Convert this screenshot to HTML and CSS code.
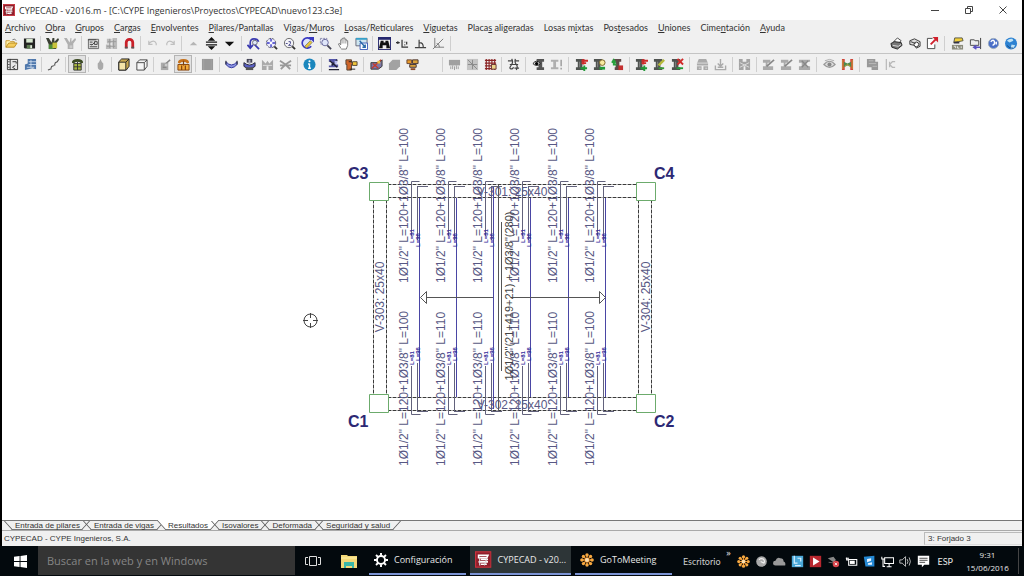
FILE: index.html
```html
<!DOCTYPE html>
<html lang="es">
<head>
<meta charset="utf-8">
<title>CYPECAD - v2016.m</title>
<link rel="stylesheet" href="styles.css">
</head>
<body>
<svg class="sprite" aria-hidden="true">
  <symbol id="logo" viewBox="0 0 14 14"><rect x=".5" y=".5" width="13" height="13" fill="#8e1f2b" stroke="#c8323c"/><path d="M3 3.500h8l-1 2h-7zM5 7h6M3 9h8M5 11h5" fill="none" stroke="#fff" stroke-width="1.300"/><path d="M4 5v7M10 6l-2 6" stroke="#ddd" fill="none"/></symbol>
  <symbol id="open" viewBox="0 0 14 14"><path d="M1 11V4h4l1 1h4v2" fill="#fff3b0" stroke="#c8962a"/><path d="M1 11l3-4.500h9L10 11z" fill="#f5cc5a" stroke="#b98a22"/><path d="M8 3q3-2 4 1" stroke="#777" fill="none"/></symbol>
  <symbol id="save" viewBox="0 0 14 14"><path d="M1 1.500h12v11H2l-1-1z" fill="#222"/><path d="M3.500 2h7v4h-7z" fill="#d8e8d0"/><path d="M4 8.500h6v4H4z" fill="#5c7a50"/><path d="M8 9h1.500v3H8z" fill="#fff"/></symbol>
  <symbol id="tools" viewBox="0 0 14 14"><path d="M0 1h3l3 5 1-5h2v4l4-4 1 2-3 4v6H3V8z" fill="#3a3f34"/><path d="M3 8h5v5H3z" fill="#4f8c38"/><path d="M7 6h5v6H7z" fill="#c8c23c"/></symbol>
  <symbol id="tools-off" viewBox="0 0 14 14"><path d="M0 1h3l3 5 1-5h1v4l4-4 1 2-3 4v6H4V8z" fill="#b0b0b0"/><path d="M6 9h3v3H6z" fill="#ccc"/></symbol>
  <symbol id="layers" viewBox="0 0 14 14"><path d="M1.500 2.500h11v10h-11z" fill="#ddd" stroke="#666"/><path d="M1 3h9M3 5.500h3M3 8h3M3 10.500h8M8 5h3v3H8zM5 9l4-4" stroke="#444" fill="none"/></symbol>
  <symbol id="layers-off" viewBox="0 0 14 14"><path d="M2 2h5v5H2zM8 1h5v12H8zM1 8h6v5H1z" fill="#bbb"/><path d="M2 10h9M3 5h9M9 3v9M5 2v10" stroke="#999"/></symbol>
  <symbol id="magnet" viewBox="0 0 14 14"><path d="M3.500 12V6a3.500 3.500 0 0 1 7 0v6" fill="none" stroke="#c91f28" stroke-width="3"/><path d="M2 10.500h3v2H2zM9 10.500h3v2H9z" fill="#555"/></symbol>
  <symbol id="undo" viewBox="0 0 14 14"><path d="M3 4v4h4M3 7q6-5 8 0v2" fill="none" stroke="#c0c0c0" stroke-width="1.300"/></symbol>
  <symbol id="redo" viewBox="0 0 14 14"><path d="M11 4v4H7M11 7q-6-5-8 0v2" fill="none" stroke="#c0c0c0" stroke-width="1.300"/></symbol>
  <symbol id="up-off" viewBox="0 0 14 14"><path d="M3 9l4-4 4 4z" fill="#b5b5b5"/></symbol>
  <symbol id="updown" viewBox="0 0 14 14"><path d="M7 0l4 4H3zM7 14l4-4H3z" fill="#111"/><path d="M1 5.500h12M1 8.500h12" stroke="#111" stroke-width="1.300"/></symbol>
  <symbol id="down" viewBox="0 0 14 14"><path d="M2 5h10l-5 5z" fill="#111"/></symbol>
  <symbol id="zoomprev" viewBox="0 0 14 14"><path d="M3.500 12V6q0-4 4-4t5 3M8 8l5 5M.500 8.500l3 3.500 3-3.500" fill="none" stroke="#3a3ab0" stroke-width="1.800"/><circle cx="8.500" cy="6" r="2.500" fill="#dfe8f8" stroke="#667"/></symbol>
  <symbol id="zoomall" viewBox="0 0 14 14"><circle cx="6.500" cy="6.500" r="5" fill="#eef" stroke="#556" stroke-dasharray="3 1"/><path d="M10 10l3 3" stroke="#333" stroke-width="2"/><path d="M6.500 2v9M2 6.500h9" stroke="#3a3ac8" stroke-width="1.500"/><circle cx="6.500" cy="6.500" r="1.600" fill="#fff"/></symbol>
  <symbol id="zoom2" viewBox="0 0 14 14"><circle cx="6.500" cy="6.500" r="5" fill="#f4f4f8" stroke="#666"/><path d="M10 10l3 3" stroke="#333" stroke-width="2"/><path d="M3 7h2M6 5h2v2L6 9h3" fill="none" stroke="#448"/></symbol>
  <symbol id="redraw" viewBox="0 0 14 14"><path d="M11 3a5.500 5.500 0 1 0 0 7" fill="#dde4fa" stroke="#3a3ac0" stroke-width="1.800"/><path d="M8 0h6v6z" fill="#3a3ac0"/><path d="M4 10l6-6 2 2-6 6z" fill="#e8c73a" stroke="#665" stroke-width=".700"/></symbol>
  <symbol id="zoomwin" viewBox="0 0 14 14"><path d="M1.500 1.500h7v6h-7z" fill="#e5e8f8" stroke="#88a" stroke-dasharray="2 1"/><circle cx="6.500" cy="6" r="3.500" fill="#dfe6fa" stroke="#669"/><path d="M9 9l4 4" stroke="#445" stroke-width="2"/></symbol>
  <symbol id="hand" viewBox="0 0 14 14"><path d="M4 12L1.500 7.500 3 7l1 1.500V3h1.500v-1.500H7V1h1.500v1.500H10V4h1.500v5L10 13H5z" fill="#fff" stroke="#777"/><path d="M5.500 3v4M7.500 2v5M9.500 3v4" stroke="#999"/></symbol>
  <symbol id="winview" viewBox="0 0 14 14"><path d="M1 1.500h12v8H1z" fill="#cfe6f0" stroke="#667"/><path d="M1 1h12v2H1z" fill="#37a0c8"/><path d="M5.500 6.500h8v7h-8z" fill="#fff" stroke="#3a5ab8"/><path d="M5 4l6 7M11 8v3H8" stroke="#2a6aa8" fill="none" stroke-width="1.500"/></symbol>
  <symbol id="binoc" viewBox="0 0 14 14"><path d="M0 0h14v14H0z" fill="#26286e"/><path d="M1 3h12v10H1z" fill="#eee"/><path d="M3 4h3v2h2V4h3l2 8H9V9H5v3H1z" fill="#111"/></symbol>
  <symbol id="snap1" viewBox="0 0 14 14"><path d="M0 6h4M2 4.500v3M6.500 3v8H13M9 8.500h1M11.500 5v3M9.500 5v1" fill="none" stroke="#333" stroke-width="1.300"/></symbol>
  <symbol id="perp" viewBox="0 0 14 14"><path d="M1 11.500h12M5.500 3v8M6 6q4 0 4 5" fill="none" stroke="#444" stroke-width="1.300"/></symbol>
  <symbol id="angle" viewBox="0 0 14 14"><path d="M3 1v10h10M1 13L12 2M5 7q3 0 3 4" fill="none" stroke="#777"/></symbol>
  <symbol id="printer" viewBox="0 0 14 14"><path d="M4 5l4-4 4 3-3 3z" fill="#fff" stroke="#444"/><path d="M1 7l4-2 7 1 1 3-5 4-6-2z" fill="#777" stroke="#222"/><path d="M3 9l6 1 3-2" stroke="#ddd" fill="none"/></symbol>
  <symbol id="print2" viewBox="0 0 14 14"><path d="M2 4l5-2 6 3v5l-4 2-2-3-5-1z" fill="#ddd" stroke="#333"/><circle cx="9" cy="8" r="2.500" fill="#fff" stroke="#333"/><path d="M3 5l5 2" stroke="#333"/></symbol>
  <symbol id="export" viewBox="0 0 14 14"><path d="M7 1.500H1.500v11h8V8" fill="#fff" stroke="#444"/><path d="M5 8l6-6" stroke="#d0202c" stroke-width="2"/><path d="M7 0h6v6z" fill="#d0202c"/></symbol>
  <symbol id="handbook" viewBox="0 0 14 14"><path d="M4 1h8l1 3-5 1-5 1z" fill="#f2cf3a" stroke="#554"/><path d="M3 5h6v2H3z" fill="#334"/><path d="M1 8.500h12v5H1z" fill="#8a8a7a"/><path d="M3 10h2v2M7 10v2h2M11 10v2" stroke="#eee" fill="none"/></symbol>
  <symbol id="folder" viewBox="0 0 14 14"><path d="M1.500 8V3h4l1 1h4v5h-9z" fill="#eee" stroke="#444"/><path d="M12.500 1v12" stroke="#333"/><path d="M12 11H6M8 9l-3 2 3 2" stroke="#5a50c0" fill="none" stroke-width="1.500"/></symbol>
  <symbol id="help" viewBox="0 0 14 14"><circle cx="7" cy="7" r="5.500" fill="#4a6fc8" stroke="#9ab"/><path d="M4 5q3-3 4 0t-2 4M10 5v3" fill="none" stroke="#fff" stroke-width="1.500"/></symbol>
  <symbol id="globe" viewBox="0 0 14 14"><circle cx="6.500" cy="7" r="6.500" fill="#2d82d2"/><path d="M2 4q3-3 6-2l1 2-4 2zM7 8l4 1-2 3-3 1z" fill="#bfe2f5"/><path d="M2 9q3 4 7 3" stroke="#15457e" fill="none"/></symbol>
  <symbol id="book" viewBox="0 0 14 14"><path d="M1.500 1.500h11v11h-11z" fill="#e8e8e8" stroke="#333"/><path d="M4.500 1v12M7 4h4v2M10 8l-3 2 3 2" stroke="#333" fill="none"/><path d="M2 4h2M2 7h2M2 10h2" stroke="#555"/></symbol>
  <symbol id="plan" viewBox="0 0 14 14"><path d="M4 1h9v11l-4-1-8 2V7l3-1z" fill="#4f78ac"/><path d="M5 4h8M5 7h8M3 10h8M7.500 2v8" stroke="#dfeaf6" fill="none" stroke-width=".800"/></symbol>
  <symbol id="stairs" viewBox="0 0 14 14"><path d="M1 13l3-1 1-3 3-1 1-3 2-1 2-3" fill="none" stroke="#555" stroke-width="1.200"/><path d="M3 12h2M7 8h2" stroke="#999"/></symbol>
  <symbol id="arch" viewBox="0 0 14 14"><path d="M1 5q0-4 6-4t6 4l-2 1q-1-2-4-2T3 6z" fill="#3b4a22"/><path d="M3 6h8v7H3z" fill="#a8b83e" stroke="#333"/><path d="M7 4v9M3 9.500h8" stroke="#333"/></symbol>
  <symbol id="arch-o" viewBox="0 0 14 14"><path d="M1 5q0-4 6-4t6 4l-2 1q-1-2-4-2T3 6z" fill="#c5701a"/><path d="M1 7h12v6H1z" fill="#f2a93a" stroke="#84420c"/><path d="M5 8v5M9 8v5M7 3v5" stroke="#84420c" stroke-width="1.300"/></symbol>
  <symbol id="drop" viewBox="0 0 14 14"><path d="M7 1q1 3 3 5v3q0 4-3 4t-3-4V6q2-2 3-5z" fill="#aaa"/></symbol>
  <symbol id="cube" viewBox="0 0 14 14"><path d="M2 4l3-3h8v8l-3 4H2z" fill="#c8a850" stroke="#222"/><path d="M2 4.500h7.500V13H2z" fill="#f4e4a8" stroke="#222"/><path d="M9.500 4.500L13 1" stroke="#222"/></symbol>
  <symbol id="cube2" viewBox="0 0 14 14"><path d="M2 5l3-3h8v7l-3 4H2zM2 5h8v8M10 5l3-3" fill="#f6f6f6" stroke="#444"/></symbol>
  <symbol id="edit-off" viewBox="0 0 14 14"><path d="M2 5h8v8H2z" fill="#aaa"/><path d="M5 8l7-6M4 10h4" stroke="#888" stroke-width="1.500"/><path d="M6 6h3v3H6z" fill="#ccc"/></symbol>
  <symbol id="slab-off" viewBox="0 0 14 14"><path d="M1 1h12v12H1z" fill="#999"/><path d="M3 1v12M11 1v12" stroke="#aaa" stroke-width=".700"/></symbol>
  <symbol id="curve" viewBox="0 0 14 14"><path d="M1 4q6 7 12 0v3q-6 7-12 0z" fill="#8d96e0" stroke="#2a2f9a"/><path d="M1 3v4M13 3v4" stroke="#222"/></symbol>
  <symbol id="load" viewBox="0 0 14 14"><path d="M4 1h6v4H4z" fill="#445" /><path d="M1 5q6 5 12 0v4q-6 5-12 0z" fill="#5a60c4" stroke="#223"/><path d="M3 10h8v3H3z" fill="#555"/><path d="M6 2h2v5H6z" fill="#aab"/></symbol>
  <symbol id="beam-off" viewBox="0 0 14 14"><path d="M1 2l4 4 2-3 2 3 4-4v11H8V9H6v4H1z" fill="#aaa"/><path d="M2 8h10" stroke="#ddd"/></symbol>
  <symbol id="cross-off" viewBox="0 0 14 14"><path d="M1 3l6 4 6-4M2 12l5-5 5 5M1 8h12" stroke="#999" stroke-width="2" fill="none"/></symbol>
  <symbol id="info" viewBox="0 0 14 14"><circle cx="7" cy="7" r="6.500" fill="#1b87bd"/><path d="M7 6v5M5.500 6.500H7M5.500 11h3" stroke="#fff" stroke-width="1.500"/><circle cx="7" cy="3.500" r="1.100" fill="#fff"/></symbol>
  <symbol id="colblue" viewBox="0 0 14 14"><path d="M2 1h9v3H9v3h3v3H2V8h3V4H2z" fill="#5557a8"/><path d="M3 3l8 7M11 2l-6 6M2 12.500h11" stroke="#223" stroke-width="1.500"/><path d="M8 3h3v3H8z" fill="#b7baf0"/></symbol>
  <symbol id="colorange" viewBox="0 0 14 14"><path d="M1 2h6v3h2v2H7v6H2V7H1z" fill="#d0662a" stroke="#543"/><path d="M8 4h5v4H8z" fill="#f0c83a" stroke="#543"/><path d="M5 12h6M4 4h3" stroke="#222"/></symbol>
  <symbol id="panel" viewBox="0 0 14 14"><path d="M1 5h9l3-3v7l-4 3H1z" fill="#7d78a8" stroke="#333"/><path d="M2 11L12 2M3 6l6 5" stroke="#c33b2e" stroke-width="1.500"/><path d="M8 3h3v3H8z" fill="#f0c040"/></symbol>
  <symbol id="blob-off" viewBox="0 0 14 14"><path d="M5 2h8v7l-4 4H1V6z" fill="#a2a2a2"/></symbol>
  <symbol id="blocks" viewBox="0 0 14 14"><path d="M1 2h5v4H1z" fill="#e89a2a" stroke="#643"/><path d="M7 2h6v4H7zM4 7h7v3H4z" fill="#d9a03a" stroke="#433"/><path d="M5 11h5v2H5z" fill="#8a4a2a"/></symbol>
  <symbol id="rain-off" viewBox="0 0 14 14"><path d="M1 2h12v6H1z" fill="#a0a0a0"/><path d="M3 9v3M5 8v4M7 9v4M9 8v4M11 9v3" stroke="#999"/></symbol>
  <symbol id="hatch-off" viewBox="0 0 14 14"><path d="M1 1h12v12H1z" fill="#c4c4c4"/><path d="M2 2l10 10M2 7h5v5M7 2v5h5" stroke="#888" fill="none"/></symbol>
  <symbol id="gridred" viewBox="0 0 14 14"><path d="M2.500 1v12M5.500 1v12M8.500 1v12M11.500 1v12M1 2.500h12M1 5.500h12M1 8.500h12M1 11.500h12" stroke="#8a2424" stroke-width="1.200"/><path d="M8 7h5v5H8z" fill="#eed38a" stroke="#633"/></symbol>
  <symbol id="rebar" viewBox="0 0 14 14"><path d="M1 3h5M8 3h5M3 7h9M3 11q3 2 4-1M8 11h5M5 1q2 3 0 6t-2 4M9 1q-1 4 1 6t0 6" fill="none" stroke="#444" stroke-width="1.300"/></symbol>
  <symbol id="eyecol" viewBox="0 0 14 14"><path d="M5 1h8v3h-2v6h2v3H5v-3h2V4H5z" fill="#555"/><path d="M1 6q4-5 8 0-4 4-8 0z" fill="#eee" stroke="#111"/><circle cx="5" cy="6" r="1.800"/></symbol>
  <symbol id="col-off" viewBox="0 0 14 14"><path d="M1 2h8v2H6.500v6H9v2H1v-2h2.500V4H1z" fill="#b0b0b0"/><path d="M12 2v7M12 10.500v2" stroke="#999" stroke-width="1.500"/></symbol>
  <symbol id="col" viewBox="0 0 14 14"><path d="M1 1h9v3H8v6h2v3H1v-3h2V4H1z" fill="#4f5350"/><path d="M5 4v6" stroke="#888"/></symbol>
  <symbol id="col-add" viewBox="0 0 14 14"><use href="#col"/><path d="M7 3h7M7 5.500h5M9 1v6" stroke="#d02a2a" stroke-width="2"/><path d="M6 11h7M10 8v6" stroke="#229a38" stroke-width="2"/></symbol>
  <symbol id="col-find" viewBox="0 0 14 14"><use href="#col"/><circle cx="10" cy="5" r="3" fill="#f8eaa0" stroke="#7a6224"/><path d="M7 11h6" stroke="#229a38" stroke-width="3"/></symbol>
  <symbol id="col-swap" viewBox="0 0 14 14"><path d="M2 1h9v3H9v6h3v3H4v-3h1V4H2z" fill="#5d4a48"/><path d="M3 8V3M1 5l2-3 2 3M2 7h4" fill="none" stroke="#27a03c" stroke-width="2"/><path d="M8 8h5v5H8z" fill="#c43030"/></symbol>
  <symbol id="col-edit" viewBox="0 0 14 14"><use href="#col"/><path d="M6 8l6-6" stroke="#b5b83a" stroke-width="2.500"/><path d="M6 11h6" stroke="#3a9a3a" stroke-width="2"/></symbol>
  <symbol id="col-del" viewBox="0 0 14 14"><use href="#col"/><path d="M7 1l6 6M13 1L7 7" stroke="#d02a2a" stroke-width="2"/><path d="M6 11h7" stroke="#229a38" stroke-width="2"/></symbol>
  <symbol id="found-off" viewBox="0 0 14 14"><path d="M3 1h8l2 5v2H1V6zM1 9h5v4H1zM8 9h5v4H8z" fill="#aaa"/><path d="M1 5.500h12M3 11h2M10 11h2" stroke="#e0e0e0"/></symbol>
  <symbol id="pile-off" viewBox="0 0 14 14"><path d="M7 1v8M4 6l3 3 3-3M1.500 8v4.500h11V8M4 10h6" stroke="#aaa" stroke-width="1.500" fill="none"/></symbol>
  <symbol id="joint-off" viewBox="0 0 14 14"><path d="M1 1h4v3h4V1h4v12H8V9H6v4H1z" fill="#a4a4a4"/><path d="M2 5l10 5M12 5L2 10" stroke="#ddd"/></symbol>
  <symbol id="node-off" viewBox="0 0 14 14"><path d="M1 2h8v3H6v4h6v4H1V9h3V5H1z" fill="#aaa"/><path d="M5 9l8-7" stroke="#888" stroke-width="1.800"/></symbol>
  <symbol id="nodex-off" viewBox="0 0 14 14"><path d="M1 2h12v2H9v5h4v4H1V9h3V5H1z" fill="#aaa"/><path d="M4 3l7 7M11 3l-7 7" stroke="#888" stroke-width="1.500"/></symbol>
  <symbol id="eye-off" viewBox="0 0 14 14"><path d="M1 7q6-7 12 0-6 6-12 0z" fill="#ddd" stroke="#999" stroke-width="1.300"/><circle cx="7" cy="7" r="2.200" fill="#888"/><path d="M2 3q5-3 10 0" stroke="#aaa" fill="none"/></symbol>
  <symbol id="beamcol" viewBox="0 0 14 14"><path d="M1 1h3v12H1zM10 1h3v12h-3z" fill="#d04038"/><path d="M3 4l4 2 4-2v6l-4-2-4 2z" fill="#4c8a4c"/><path d="M2 2v10M12 2v10M4 9l3-2 3 2" stroke="#c8a23a" fill="none"/></symbol>
  <symbol id="fill-off" viewBox="0 0 14 14"><path d="M1 1h9v3h3v9H6v-3H1z" fill="#999"/><path d="M3 3h5M3 6h8M7 9h5" stroke="#bbb"/></symbol>
  <symbol id="kmark" viewBox="0 0 14 14"><path d="M2.500 1v12M12 4H9L6 7l3 3h3M6 4v6" stroke="#b8b8b8" fill="none" stroke-width="1.300"/></symbol>
  <symbol id="flower" viewBox="0 0 16 16"><path d="M8 2v12M2 8h12M4 4l8 8M12 4l-8 8" stroke="#f0922a" stroke-width="1.500"/><g fill="#f7a840"><circle cx="8" cy="2.200" r="2"/><circle cx="8" cy="13.800" r="2"/><circle cx="2.200" cy="8" r="2"/><circle cx="13.800" cy="8" r="2"/><circle cx="3.900" cy="3.900" r="1.900"/><circle cx="12.100" cy="3.900" r="1.900"/><circle cx="3.900" cy="12.100" r="1.900"/><circle cx="12.100" cy="12.100" r="1.900"/></g><circle cx="8" cy="8" r="2.300" fill="#fbe0b0"/></symbol>
  <symbol id="gear" viewBox="0 0 16 16"><circle cx="8" cy="8" r="4.600" fill="none" stroke="#fff" stroke-width="2.200"/><path d="M8 0v3M8 13v3M0 8h3M13 8h3M2.300 2.300l2.200 2.200M11.500 11.500l2.200 2.200M13.700 2.300l-2.200 2.200M4.500 11.500l-2.200 2.200" stroke="#fff" stroke-width="2.200"/></symbol>
</svg>

<div class="screen">
  <header class="title">
    <svg class="i"><use href="#logo"/></svg>
    <h1>CYPECAD - v2016.m - [C:\CYPE Ingenieros\Proyectos\CYPECAD\nuevo123.c3e]</h1>
    <div class="winbtns">
      <button aria-label="Minimizar"><svg viewBox="0 0 10 10"><path d="M1 5.500h8"/></svg></button>
      <button aria-label="Restaurar"><svg viewBox="0 0 10 10"><path d="M1.500 3.500h5v5h-5zM3.500 3V1.500h5v5H7"/></svg></button>
      <button aria-label="Cerrar"><svg viewBox="0 0 10 10"><path d="M1.500 1.500l7 7M8.500 1.500l-7 7"/></svg></button>
    </div>
  </header>

  <nav class="menu">
    <button><u>A</u>rchivo</button><button><u>O</u>bra</button><button><u>G</u>rupos</button><button><u>C</u>argas</button><button><u>E</u>nvolventes</button><button><u>P</u>ilares/Pantallas</button><button>Vigas/<u>M</u>uros</button><button><u>L</u>osas/Reticulares</button><button><u>V</u>iguetas</button><button>Placa<u>s</u> aligeradas</button><button>Losas m<u>i</u>xtas</button><button>Pos<u>t</u>esados</button><button><u>U</u>niones</button><button>Cime<u>n</u>tación</button><button><u>A</u>yuda</button>
  </nav>

  <div class="bar" role="toolbar" aria-label="General">
    <button aria-label="Abrir"><svg><use href="#open"/></svg></button>
    <button aria-label="Guardar"><svg><use href="#save"/></svg></button>
    <i class="tight"></i>
    <button aria-label="Herramientas"><svg><use href="#tools"/></svg></button>
    <button aria-label="Recursos"><svg><use href="#tools-off"/></svg></button>
    <i class="tight"></i>
    <button aria-label="Plantillas"><svg><use href="#layers"/></svg></button>
    <button aria-label="Capas"><svg><use href="#layers-off"/></svg></button>
    <button aria-label="Capturas"><svg><use href="#magnet"/></svg></button>
    <i class="tight"></i>
    <button aria-label="Deshacer"><svg><use href="#undo"/></svg></button>
    <button aria-label="Rehacer"><svg><use href="#redo"/></svg></button>
    <i class="tight"></i>
    <button aria-label="Subir grupo"><svg><use href="#up-off"/></svg></button>
    <button aria-label="Ir a grupo"><svg><use href="#updown"/></svg></button>
    <button aria-label="Bajar grupo"><svg><use href="#down"/></svg></button>
    <i></i>
    <button aria-label="Vista previa"><svg><use href="#zoomprev"/></svg></button>
    <button aria-label="Ver todo"><svg><use href="#zoomall"/></svg></button>
    <button aria-label="Zoom doble"><svg><use href="#zoom2"/></svg></button>
    <button aria-label="Redibujar"><svg><use href="#redraw"/></svg></button>
    <button aria-label="Zoom ventana"><svg><use href="#zoomwin"/></svg></button>
    <button aria-label="Mover"><svg><use href="#hand"/></svg></button>
    <button aria-label="Ventanas"><svg><use href="#winview"/></svg></button>
    <i class="tight"></i>
    <button aria-label="Buscar"><svg><use href="#binoc"/></svg></button>
    <button aria-label="Coordenadas"><svg><use href="#snap1"/></svg></button>
    <button aria-label="Ortogonal"><svg><use href="#perp"/></svg></button>
    <button aria-label="Ángulo"><svg><use href="#angle"/></svg></button>
    <i></i>
    <span class="grow"></span>
    <button aria-label="Imprimir"><svg><use href="#printer"/></svg></button>
    <button aria-label="Planos"><svg><use href="#print2"/></svg></button>
    <button aria-label="Exportar"><svg><use href="#export"/></svg></button>
    <i class="wide"></i>
    <button aria-label="Manual"><svg><use href="#handbook"/></svg></button>
    <button aria-label="Carpeta"><svg><use href="#folder"/></svg></button>
    <button aria-label="Ayuda"><svg><use href="#help"/></svg></button>
    <button aria-label="Web"><svg><use href="#globe"/></svg></button>
  </div>

  <div class="bar second" role="toolbar" aria-label="Resultados">
    <button aria-label="Listados"><svg><use href="#book"/></svg></button>
    <button aria-label="Planta"><svg><use href="#plan"/></svg></button>
    <i class="tight"></i>
    <button aria-label="Escaleras"><svg><use href="#stairs"/></svg></button>
    <i></i>
    <button class="on" aria-label="Referencias"><svg><use href="#arch"/></svg></button>
    <i class="tight"></i>
    <button aria-label="Fuego"><svg><use href="#drop"/></svg></button>
    <i class="tight"></i>
    <button aria-label="Vista 3D"><svg><use href="#cube"/></svg></button>
    <button aria-label="Vista 3D del grupo"><svg><use href="#cube2"/></svg></button>
    <i></i>
    <button aria-label="Editar"><svg><use href="#edit-off"/></svg></button>
    <button class="on" aria-label="Armados"><svg><use href="#arch-o"/></svg></button>
    <i></i>
    <button aria-label="Losa"><svg><use href="#slab-off"/></svg></button>
    <i></i>
    <button aria-label="Flecha"><svg><use href="#curve"/></svg></button>
    <button aria-label="Cargas"><svg><use href="#load"/></svg></button>
    <button aria-label="Viga"><svg><use href="#beam-off"/></svg></button>
    <button aria-label="Borrar viga"><svg><use href="#cross-off"/></svg></button>
    <i></i>
    <button aria-label="Información"><svg><use href="#info"/></svg></button>
    <i></i>
    <button aria-label="Pilar"><svg><use href="#colblue"/></svg></button>
    <button aria-label="Bloquear pilar"><svg><use href="#colorange"/></svg></button>
    <i class="wide"></i>
    <button aria-label="Paño"><svg><use href="#panel"/></svg></button>
    <button aria-label="Hueco"><svg><use href="#blob-off"/></svg></button>
    <button aria-label="Bloques"><svg><use href="#blocks"/></svg></button>
    <span class="slot"></span>
    <i></i>
    <button aria-label="Superficial"><svg><use href="#rain-off"/></svg></button>
    <button aria-label="Trama"><svg><use href="#hatch-off"/></svg></button>
    <button aria-label="Malla"><svg><use href="#gridred"/></svg></button>
    <i class="tight"></i>
    <button aria-label="Armadura"><svg><use href="#rebar"/></svg></button>
    <i class="wide"></i>
    <button aria-label="Ver pilar"><svg><use href="#eyecol"/></svg></button>
    <button aria-label="Error en pilar"><svg><use href="#col-off"/></svg></button>
    <i class="wide"></i>
    <button aria-label="Asignar"><svg><use href="#col-add"/></svg></button>
    <button aria-label="Consultar"><svg><use href="#col-find"/></svg></button>
    <button aria-label="Intercambiar"><svg><use href="#col-swap"/></svg></button>
    <i></i>
    <button aria-label="Añadir refuerzo"><svg><use href="#col-add"/></svg></button>
    <button aria-label="Editar refuerzo"><svg><use href="#col-edit"/></svg></button>
    <button aria-label="Borrar refuerzo"><svg><use href="#col-del"/></svg></button>
    <i class="wide"></i>
    <button aria-label="Cimentación"><svg><use href="#found-off"/></svg></button>
    <button aria-label="Pilotes"><svg><use href="#pile-off"/></svg></button>
    <i></i>
    <button aria-label="Uniones"><svg><use href="#joint-off"/></svg></button>
    <i></i>
    <button aria-label="Nudo"><svg><use href="#node-off"/></svg></button>
    <button aria-label="Editar nudo"><svg><use href="#node-off"/></svg></button>
    <button aria-label="Borrar nudo"><svg><use href="#nodex-off"/></svg></button>
    <i class="wide"></i>
    <button aria-label="Ver"><svg><use href="#eye-off"/></svg></button>
    <button aria-label="Pórtico"><svg><use href="#beamcol"/></svg></button>
    <i class="wide"></i>
    <button aria-label="Relleno"><svg><use href="#fill-off"/></svg></button>
    <button aria-label="Cotas"><svg><use href="#kmark"/></svg></button>
  </div>

  <main class="canvas">
    <svg class="drawing" viewBox="300 123 424 350" role="img" aria-label="Planta Forjado 3">
      <defs>
        <g id="bars">
          <path class="bar-grey" d="M411.500 236V181.500h8M417.500 240V187M417 186.500h11M411.500 366v48.500h9M417.500 363v49M417 411.500h11"/>
          <path class="bar-blue" d="M419.500 198v199"/>
          <text class="tiny" transform="translate(414 243) rotate(-90)">L=81</text>
          <text class="tiny" transform="translate(420 247) rotate(-90)">L=96</text>
          <text class="tiny" transform="translate(414 365) rotate(-90)">L=81</text>
          <text class="tiny" transform="translate(420 361) rotate(-90)">L=96</text>
          <text class="rebar" transform="translate(408 283) rotate(-90)">1Ø1/2" L=120+1Ø3/8" L=100</text>
        </g>
      </defs>
      <g class="beams">
        <path class="under" d="M388 184.500h248M388 197.500h248M388 397.500h248M388 410.500h248M373.500 200v195M386.500 200v195M638.500 200v195M651.500 200v195"/>
        <path class="dash" d="M388 184.500h248M388 197.500h248M388 397.500h248M388 410.500h248M373.500 200v195M386.500 200v195M638.500 200v195M651.500 200v195"/>
      </g>
      <g class="columns"><path d="M369.500 182.500h19v18h-19zM636.500 182.500h19v18h-19zM369.500 394.500h19v18h-19zM636.500 394.500h19v18h-19z"/></g>
      <use href="#bars"/><use href="#bars" x="37"/><use href="#bars" x="74"/><use href="#bars" x="111"/><use href="#bars" x="149"/><use href="#bars" x="186"/>
      <g class="rebar">
        <text transform="translate(408 466) rotate(-90)">1Ø1/2" L=120+1Ø3/8" L=100</text>
        <text transform="translate(445 466) rotate(-90)">1Ø1/2" L=120+1Ø3/8" L=110</text>
        <text transform="translate(482 466) rotate(-90)">1Ø1/2" L=120+1Ø3/8" L=110</text>
        <text transform="translate(519 466) rotate(-90)">1Ø1/2" L=120+1Ø3/8" L=110</text>
        <text transform="translate(557 466) rotate(-90)">1Ø1/2" L=120+1Ø3/8" L=110</text>
        <text transform="translate(594 466) rotate(-90)">1Ø1/2" L=120+1Ø3/8" L=100</text>
      </g>
      <g class="rebar mid">
        <text x="512" y="196">V-301: 25x40</text>
        <text x="512" y="409">V-302: 25x40</text>
        <text transform="translate(384 297) rotate(-90)">V-303: 25x40</text>
        <text transform="translate(650 297) rotate(-90)">V-304: 25x40</text>
      </g>
      <path class="span" d="M427 297.500h67M511 297.500h88M498.500 185v226M501.500 222v149M420.500 297.500l6-6v12zM605.500 297.500l-6-6v12z"/>
      <path class="bar-blue" d="M493.500 187v222"/>
      <text class="main-bar" transform="translate(513 296) rotate(-90)">1Ø1/2"(21+419+21) + 1Ø3/8"(280)</text>
      <g class="names"><text x="348" y="179">C3</text><text x="654" y="179">C4</text><text x="348" y="427">C1</text><text x="654" y="427">C2</text></g>
      <g class="cursor"><circle cx="310.500" cy="320.500" r="6.500"/><path d="M310.500 313v5M310.500 323v5M303 320.500h5M313 320.500h5"/></g>
    </svg>
  </main>

  <div class="tabs" role="tablist">
    <button role="tab"><span>Entrada de pilares</span></button>
    <button role="tab"><span>Entrada de vigas</span></button>
    <button role="tab" class="current" aria-selected="true"><span>Resultados</span></button>
    <button role="tab"><span>Isovalores</span></button>
    <button role="tab"><span>Deformada</span></button>
    <button role="tab"><span>Seguridad y salud</span></button>
  </div>

  <div class="status"><span>CYPECAD - CYPE Ingenieros, S.A.</span><span class="floor">3: Forjado 3</span></div>
</div>

<footer class="taskbar">
  <button class="start" aria-label="Inicio"><svg viewBox="0 0 14 14"><path d="M0 2l6-1v5.500H0zM7 1l7-1v6.500H7zM0 7.500h6V13l-6-1zM7 7.500h7V14l-7-1z" fill="#fff"/></svg></button>
  <input class="search" type="text" placeholder="Buscar en la web y en Windows" aria-label="Buscar en la web y en Windows">
  <button class="quick" aria-label="Vista de tareas"><svg viewBox="0 0 16 16"><path d="M4.500 3.500h7v9h-7zM3 4.500H.500v7H3M13 4.500h2.500v7H13" fill="none" stroke="#ddd"/></svg></button>
  <button class="quick" aria-label="Explorador"><svg viewBox="0 0 16 16"><path d="M0 2h6l1 1h9v12H0z" fill="#f3d877"/><path d="M3 9h10v6h-2v-2H5v2H3z" fill="#3bb8a8"/><path d="M0 5h16" stroke="#fff0a8"/></svg></button>
  <button class="app"><svg class="ai"><use href="#gear"/></svg>Configuración</button>
  <button class="app front"><svg class="ai big"><use href="#logo"/></svg>CYPECAD - v20...</button>
  <button class="app"><svg class="ai"><use href="#flower"/></svg>GoToMeeting</button>
  <span class="grow"></span>
  <button class="desk">Escritorio</button><button class="more" aria-label="Más">»</button>
  <div class="tray">
    <svg viewBox="0 0 16 16"><use href="#flower"/></svg>
    <svg viewBox="0 0 16 16"><circle cx="8" cy="8" r="6.500" fill="#aaa"/><path d="M5 6a3.500 3.500 0 0 1 6 4M11 10l-4-2" stroke="#eee" fill="none" stroke-width="1.500"/></svg>
    <svg viewBox="0 0 16 16"><path d="M3 13a3 3 0 0 1 0-6q2-5 6-3 4 0 4 4 3 1 2 5z" fill="#999"/></svg>
    <svg viewBox="0 0 16 16"><path d="M1 1h14v14H1z" fill="#4aa8d8"/><path d="M4 1v9h4M8 4h4v4M5 13h7" stroke="#d8f0ff" fill="none" stroke-width="1.500"/></svg>
    <svg viewBox="0 0 16 16"><path d="M1 1h14v14H1z" fill="#b8272f"/><path d="M5 3l8 5-8 5z" fill="#fff"/></svg>
    <svg viewBox="0 0 16 16"><path d="M1 4l7-2 3 4-3 3z" fill="#888"/><path d="M2 9l9 1" stroke="#777"/><circle cx="11" cy="11" r="4" fill="#d8434a"/><path d="M9.500 9.500l3 3M12.500 9.500l-3 3" stroke="#fff"/></svg>
    <svg viewBox="0 0 16 16"><path d="M4.500 5.500h10v7h-10zM2 3v3h3M1 4h4" fill="none" stroke="#fff" stroke-width="1.300"/><path d="M6 7h6v4H6z" fill="#fff"/></svg>
    <svg viewBox="0 0 16 16"><path d="M1 2l13-1v13H3z" fill="#2489d4"/><path d="M5 5l5-1v3l-5 2zM6 10l5-1v3H6z" fill="#e8f4ff"/></svg>
    <svg viewBox="0 0 16 16"><path d="M4.500 3.500h11v7h-11zM10 11v3M7 14.500h6M1 2v3h3M2.500 5v9H5" fill="none" stroke="#fff" stroke-width="1.300"/></svg>
    <svg viewBox="0 0 16 16"><path d="M1 6h3l4-4v12l-4-4H1zM10 5q2 3 0 6M12.500 3q3 5 0 10" fill="none" stroke="#ddd"/></svg>
    <svg viewBox="0 0 16 16"><path d="M1 1h14v11H9l-3 3v-3H1z" fill="#fff"/><path d="M3 4h10M3 6.500h10M3 9h7" stroke="#222"/></svg>
  </div>
  <span class="lang">ESP</span>
  <time class="clock">9:31<br>15/06/2016</time>
</footer>
</body>
</html>
```
FILE: styles.css
```css
* { box-sizing: border-box; }

body {
  margin: 0;
  height: 100vh;
  display: flex;
  flex-direction: column;
  background: #000;
  color: #333;
  font-family: "Open Sans", "Noto Sans", sans-serif;
  overflow: hidden;
}

button {
  padding: 0;
  border: 0;
  background: none;
  color: inherit;
  font: inherit;
}

.sprite { position: absolute; width: 0; height: 0; }
.grow { flex: 1; }

.screen {
  flex: 1;
  min-height: 0;
  margin: 0 2px;
  display: flex;
  flex-direction: column;
  background: #f0f0f0;
}

/* Title bar */
.title {
  display: flex;
  align-items: center;
  height: 20px;
  padding: 0 14px 0 1px;
  gap: 4px;
  background: #fff;
}
.title .i { width: 12px; height: 12px; }
.title h1 { flex: 1; margin: 0; font-size: 9px; font-weight: 400; }
.winbtns { display: flex; gap: 24px; }
.winbtns svg { display: block; width: 10px; height: 10px; fill: none; stroke: #444; }

/* Menu */
.menu {
  display: flex;
  gap: 10px;
  height: 14px;
  padding-left: 3px;
  align-items: center;
  font-family: Lato, "Open Sans", sans-serif;
  font-size: 9px;
  white-space: nowrap;
}
.menu u { text-underline-offset: 1px; }

/* Toolbars */
.bar {
  display: flex;
  align-items: center;
  height: 19px;
  padding-right: 2px;
}
.bar.second { height: 22px; border-top: 1px solid #c4c4c4; border-bottom: 1px solid #cfcfcf; padding-left: 1px; }
.bar button {
  display: grid;
  place-items: center;
  width: 18px;
  height: 18px;
}
.bar svg { width: 13px; height: 13px; }
.bar .on { background: #e2e2e2; outline: 1px solid #b4b4b4; outline-offset: -1px; }
.bar i { width: 6px; height: 15px; background: linear-gradient(#cfcfcf, #cfcfcf) center / 1px 100% no-repeat; }
.bar .tight { width: 5px; }
.bar .wide { width: 7px; }
.bar .slot { width: 18px; }

/* Drawing */
.canvas {
  flex: 1;
  min-height: 0;
  display: flex;
  align-items: center;
  justify-content: center;
  background: #fff;
}
.drawing { width: 424px; height: 350px; font-family: "Liberation Sans", Arial, sans-serif; }
.drawing path { fill: none; }
.under { stroke: #aaa; }
.dash { stroke: #3a3a3a; stroke-dasharray: 3 2; }
.columns path { stroke: #6cab6c; fill: #fff; }
.bar-grey { stroke: #62627c; }
.bar-blue { stroke: #4a46a4; }
.rebar { font-size: 12px; fill: #585884; }
.mid { text-anchor: middle; }
.tiny { font-size: 6px; font-weight: 700; fill: #2f2a9a; }
.span { stroke: #555; }
.main-bar { font-size: 11px; fill: #444; text-anchor: middle; }
.names { font-size: 16px; font-weight: 700; fill: #2c2874; }
.cursor { fill: none; stroke: #444; }

/* View tabs */
.tabs {
  display: flex;
  height: 11px;
  padding-left: 6px;
  border-top: 1px solid #777;
  border-bottom: 1px solid #aaa;
  font: 8px "Liberation Sans", Arial, sans-serif;
}
.tabs button { position: relative; padding: 0 7px; line-height: 9px; }
.tabs button::before,
.tabs button::after {
  content: "";
  position: absolute;
  top: 0;
  bottom: 0;
  width: 50%;
  border-bottom: 1px solid #777;
}
.tabs button::before { left: 0; transform: skewX(42deg); border-left: 1px solid #555; }
.tabs button::after { right: 0; transform: skewX(-42deg); border-right: 1px solid #555; }
.tabs span { position: relative; z-index: 1; }
.tabs .current::before, .tabs .current::after { top: -1px; width: 70%; background: #fff; }

/* Status bar */
.status {
  display: flex;
  justify-content: space-between;
  align-items: center;
  height: 15px;
  padding-left: 2px;
  font: 8px "Liberation Sans", Arial, sans-serif;
}
.floor { width: 98px; padding: 1px 3px; border: 1px solid #bbb; border-right: 0; border-bottom-color: #ddd; }

/* Taskbar */
.taskbar {
  display: flex;
  align-items: stretch;
  height: 30px;
  padding: 0 5px 0 2px;
  background: #03090d;
  color: #e8e8e8;
  font-size: 9px;
  white-space: nowrap;
}
.start { width: 36px; }
.start svg { width: 13px; height: 13px; display: block; margin: auto; }
.search {
  width: 257px;
  margin: 0 0 1px;
  padding: 0 9px;
  border: 0;
  background: #343434;
  font: 11px "Open Sans", sans-serif;
}
.search::placeholder { color: #858585; opacity: 1; }
.quick { width: 36px; display: grid; place-items: center; }
.quick svg { width: 16px; height: 16px; }
.app {
  display: flex;
  align-items: center;
  gap: 6px;
  width: 97px;
  margin: 0 2px 1px;
  padding: 0 5px;
  border-bottom: 2px solid #7b93d4;
}
.front { width: 101px; background: #2d3537; }
.ai { width: 14px; height: 14px; }
.ai.big { width: 17px; height: 17px; }
.desk, .lang { font-family: Lato, "Open Sans", sans-serif; }
.desk { color: #ccc; }
.more { align-self: flex-start; width: 16px; }
.tray { display: flex; align-items: center; gap: 5px; }
.tray svg { width: 13px; height: 13px; }
.lang { align-self: center; margin-left: 8px; }
.clock {
  align-self: center;
  width: 62px;
  margin-left: 4px;
  border-right: 1px solid #444;
  text-align: center;
  font-size: 8px;
  line-height: 13px;
}
```
